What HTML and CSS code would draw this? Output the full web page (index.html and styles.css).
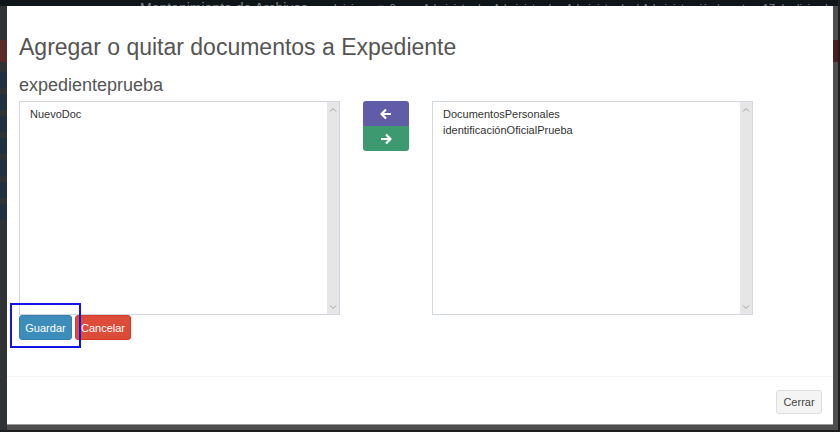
FILE: index.html
```html
<!DOCTYPE html>
<html lang="es">
<head>
    <meta charset="UTF-8">
    <title>Mantenimiento de Archivos</title>
    <link rel="stylesheet" href="styles.css">
</head>
<body>
    <div class="app">
        <div class="topbar">
            <span class="brand">Mantenimiento de Archivos</span>
            <span class="nav-item">&#9632; Inicio</span>
            <span class="nav-item">&#9660; 0</span>
            <span class="nav-user">&#9679; Administrador Administrador, Administrador | Administración | martes, 17 de diciembre</span>
        </div>
        <div class="app-main">
            <div class="sidebar">
                <div class="side-item red"></div>
                <div class="side-item blue"></div>
                <div class="side-item blue"></div>
                <div class="side-item blue"></div>
                <div class="side-item blue"></div>
                <div class="side-item blue"></div>
                <div class="side-item blue"></div>
                <div class="side-item blue"></div>
            </div>
            <div class="content"><div class="content-red"></div></div>
        </div>
    </div>

    <div class="modal">
        <div class="modal-body">
            <h3 class="modal-title">Agregar o quitar documentos a Expediente</h3>
            <h4 class="exp-name">expedienteprueba</h4>
            <div class="picker">
                <div class="listbox">
                    <div class="options">
                        <div class="option">NuevoDoc</div>
                    </div>
                    <div class="scroll">
                        <svg width="8" height="5" viewBox="0 0 8 5"><path d="M1 4.5 L4 1.5 L7 4.5" fill="none" stroke="#a0a0a0" stroke-width="1"/></svg>
                        <svg width="8" height="5" viewBox="0 0 8 5"><path d="M1 0.5 L4 3.5 L7 0.5" fill="none" stroke="#a0a0a0" stroke-width="1"/></svg>
                    </div>
                </div>
                <div class="movers">
                    <button class="move move-left">
                        <svg width="12" height="12" viewBox="0 0 12 12"><path d="M11 6 H2 M6 1.5 L1.5 6 L6 10.5" fill="none" stroke="#fff" stroke-width="2.2" stroke-linejoin="round"/></svg>
                    </button>
                    <button class="move move-right">
                        <svg width="12" height="12" viewBox="0 0 12 12"><path d="M1 6 H10 M6 1.5 L10.5 6 L6 10.5" fill="none" stroke="#fff" stroke-width="2.2" stroke-linejoin="round"/></svg>
                    </button>
                </div>
                <div class="listbox">
                    <div class="options">
                        <div class="option">DocumentosPersonales</div>
                        <div class="option">identificaciónOficialPrueba</div>
                    </div>
                    <div class="scroll">
                        <svg width="8" height="5" viewBox="0 0 8 5"><path d="M1 4.5 L4 1.5 L7 4.5" fill="none" stroke="#a0a0a0" stroke-width="1"/></svg>
                        <svg width="8" height="5" viewBox="0 0 8 5"><path d="M1 0.5 L4 3.5 L7 0.5" fill="none" stroke="#a0a0a0" stroke-width="1"/></svg>
                    </div>
                </div>
            </div>
            <div class="actions">
                <button class="btn btn-primary">Guardar</button>
                <button class="btn btn-danger">Cancelar</button>
                <div class="highlight"></div>
            </div>
        </div>
        <div class="modal-footer">
            <button class="btn btn-default">Cerrar</button>
        </div>
    </div>
</body>
</html>
```

FILE: styles.css
```css
* { margin: 0; padding: 0; box-sizing: border-box; }
body { width: 840px; height: 432px; overflow: hidden; font-family: "Liberation Sans", Arial, sans-serif; background: #4a4a4a; position: relative; }

/* page behind the dialog (dimmed) */
.app { height: 432px; display: flex; flex-direction: column; border-bottom: 2px solid #1e1e1e; border-right: 2px solid #1e1e1e; }
.topbar { height: 6px; background: #0f1619; display: flex; align-items: flex-end; overflow: hidden; white-space: nowrap; color: #7d8387; font-size: 13px; }
.topbar span { line-height: 14px; margin-bottom: -9px; }
.brand { margin-left: 140px; font-size: 14px; }
.nav-item { margin-left: 16px; font-size: 11px; }
.nav-item:first-of-type { margin-left: 122px; }
.nav-user { margin-left: 18px; font-size: 11px; }
.app-main { flex: 1; display: flex; }
.sidebar { width: 7px; background: #2f3335; padding-top: 34px; display: flex; flex-direction: column; gap: 6px; }
.side-item { height: 16px; }
.side-item.red { background: #5a2a28; height: 22px; margin-bottom: 4px; }
.side-item.blue { background: #223140; }
.content { flex: 1; background: #4e4e4e; padding-top: 34px; display: flex; justify-content: flex-end; }
.content-red { width: 7px; height: 22px; background: #4a1f1f; }

/* dialog */
.modal { position: absolute; left: 7px; top: 6px; width: 826px; height: 418px; background: #fff; display: flex; flex-direction: column; box-shadow: 0 1px 0 #9a9a9a; }
.modal-body { flex: 1; padding: 26px 12px 0; }
.modal-title { font-size: 23px; font-weight: normal; line-height: 30px; color: #555; }
.exp-name { font-size: 18px; font-weight: normal; line-height: 22px; color: #555; margin-top: 12px; }

.picker { display: flex; gap: 23px; margin-top: 5px; }
.listbox { width: 321px; height: 214px; border: 1px solid #d2d6de; display: flex; }
.options { flex: 1; padding: 4px 10px; font-size: 11px; line-height: 16px; color: #333; }
.scroll { width: 12px; background: #e6e6e6; display: flex; flex-direction: column; justify-content: space-between; align-items: center; padding: 5px 0 4px; }
.movers { width: 46px; display: flex; flex-direction: column; }
.move { height: 25px; border: none; display: flex; align-items: center; justify-content: center; }
.move-left { background: #605ca8; border-radius: 3px 3px 0 0; }
.move-right { background: #3d9970; border-radius: 0 0 3px 3px; }

.actions { display: flex; gap: 3px; position: relative; }
.btn { font-family: "Liberation Sans", Arial, sans-serif; font-size: 11px; border-radius: 3px; border: 1px solid transparent; cursor: pointer; }
.btn-primary { width: 53px; height: 25px; background: #3c8dbc; border-color: #367fa9; color: #fff; }
.btn-danger { width: 56px; height: 25px; background: #dd4b39; border-color: #d73925; color: #fff; }
.btn-default { width: 46px; height: 24px; background: #f4f4f4; border-color: #ddd; color: #444; }
.highlight { position: absolute; left: -9px; top: -12px; width: 71px; height: 45px; border: 2px solid #1414e6; }

.modal-footer { border-top: 1px solid #f4f4f4; padding: 13px 11px 10px; display: flex; justify-content: flex-end; }
```
